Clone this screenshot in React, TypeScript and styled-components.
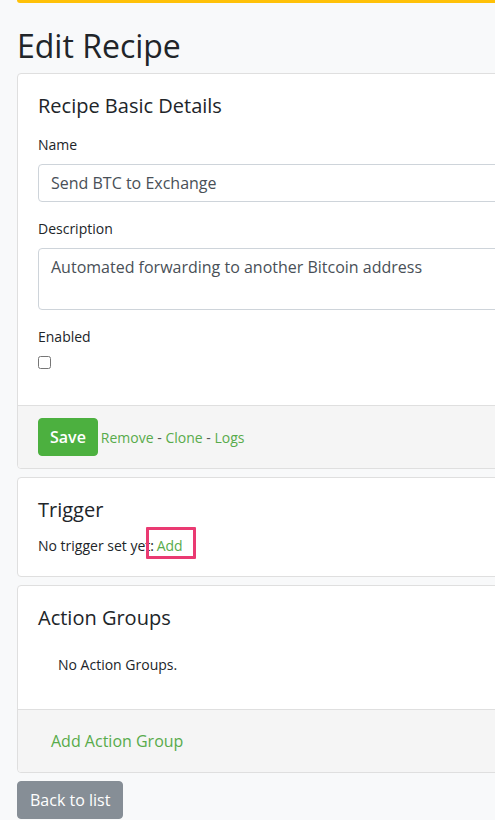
import React from "react";
import styled, { createGlobalStyle } from "styled-components";

const GlobalStyle = createGlobalStyle`
  html, body {
    margin: 0;
    padding: 0;
    background: #f8f9fa;
    overflow: hidden;
  }
  body {
    font-family: "Open Sans", "Liberation Sans", sans-serif;
    font-size: 14px;
    line-height: 1.5;
    color: #212529;
  }
  * { box-sizing: border-box; }
`;

const Page = styled.div`
  width: 620px;
  padding: 0 0 20px 17px;
`;

const TopBar = styled.div`
  height: 3px;
  background: #ffc107;
  border-bottom-left-radius: 4px;
`;

const PageTitle = styled.h1`
  margin: 24px 0 8px;
  font-size: 32px;
  font-weight: 400;
  line-height: 1.2;
`;

const Card = styled.section`
  background: #fff;
  border: 1px solid #dfdfdf;
  border-radius: 4px;
  margin-bottom: 8px;
`;

const CardBody = styled.div`
  padding: 20px;
`;

const CardTitle = styled.h5<{ $gap: number }>`
  margin: 0 0 ${(p) => p.$gap}px;
  font-size: 20px;
  font-weight: 400;
  line-height: 1.2;
`;

const CardFooter = styled.div`
  background: #f5f5f5;
  border-top: 1px solid #dfdfdf;
  padding: 12px 20px;
  display: flex;
  align-items: center;
  border-radius: 0 0 4px 4px;
`;

const FormGroup = styled.div`
  margin-bottom: 16px;
`;

const Label = styled.label`
  display: block;
  margin-bottom: 9px;
  font-size: 14px;
`;

const TextInput = styled.input`
  display: block;
  width: 100%;
  height: 38px;
  padding: 6px 12px;
  font-family: inherit;
  font-size: 16px;
  line-height: 1.5;
  color: #495057;
  background: #fff;
  border: 1px solid #ced4da;
  border-radius: 4px;
`;

const TextArea = styled.textarea`
  display: block;
  width: 100%;
  height: 62px;
  padding: 6px 12px;
  font-family: inherit;
  font-size: 16px;
  line-height: 1.5;
  color: #495057;
  background: #fff;
  border: 1px solid #ced4da;
  border-radius: 4px;
  resize: none;
`;

const Checkbox = styled.input`
  display: block;
  margin: 0;
  width: 13px;
  height: 13px;
`;

const Button = styled.button<{ $variant: "success" | "secondary" | "link" }>`
  height: 38px;
  padding: 0 ${(p) => (p.$variant === "success" ? 11 : 12)}px;
  font-family: inherit;
  font-size: 16px;
  line-height: 1.5;
  border-radius: 4px;
  cursor: pointer;
  border: 1px solid
    ${(p) =>
      p.$variant === "success"
        ? "#4cb03f"
        : p.$variant === "secondary"
        ? "#868e96"
        : "transparent"};
  background: ${(p) =>
    p.$variant === "success"
      ? "#4cb03f"
      : p.$variant === "secondary"
      ? "#868e96"
      : "transparent"};
  color: ${(p) => (p.$variant === "link" ? "#58ab4b" : "#fff")};
  font-weight: ${(p) => (p.$variant === "success" ? 600 : 500)};
`;

const LinkRow = styled.span`
  margin-left: 3px;
  font-size: 14px;
  color: #555;
`;

const Link = styled.a`
  color: #58ab4b;
  text-decoration: none;
`;

const Text = styled.p`
  margin: 0;
  font-size: 14px;
`;

const Highlight = styled.span`
  position: relative;
  margin-left: -1px;
  &::after {
    content: "";
    position: absolute;
    left: -11px;
    right: -13px;
    top: -9px;
    bottom: -4px;
    border: 3px solid #ea3a72;
    border-radius: 1px;
  }
`;

const EmptyNote = styled.p`
  margin: 24px 0 14px;
  padding: 0 20px;
  font-size: 14px;
`;

export default function App() {
  return (
    <>
      <GlobalStyle />
      <Page>
        <TopBar />
        <PageTitle>Edit Recipe</PageTitle>

        <Card>
          <CardBody>
            <CardTitle $gap={16}>Recipe Basic Details</CardTitle>
            <FormGroup>
              <Label>Name</Label>
              <TextInput defaultValue="Send BTC to Exchange" />
            </FormGroup>
            <FormGroup>
              <Label>Description</Label>
              <TextArea defaultValue="Automated forwarding to another Bitcoin address" />
            </FormGroup>
            <FormGroup>
              <Label>Enabled</Label>
              <Checkbox type="checkbox" />
            </FormGroup>
          </CardBody>
          <CardFooter>
            <Button $variant="success">Save</Button>
            <LinkRow>
              <Link href="#">Remove</Link> - <Link href="#">Clone</Link> -{" "}
              <Link href="#">Logs</Link>
            </LinkRow>
          </CardFooter>
        </Card>

        <Card>
          <CardBody>
            <CardTitle $gap={13}>Trigger</CardTitle>
            <Text>
              No trigger set yet:{" "}
              <Highlight>
                <Link href="#">Add</Link>
              </Highlight>
            </Text>
          </CardBody>
        </Card>

        <Card>
          <CardBody>
            <CardTitle $gap={0}>Action Groups</CardTitle>
            <EmptyNote>No Action Groups.</EmptyNote>
          </CardBody>
          <CardFooter>
            <Button $variant="link">Add Action Group</Button>
          </CardFooter>
        </Card>

        <Button $variant="secondary">Back to list</Button>
      </Page>
    </>
  );
}
